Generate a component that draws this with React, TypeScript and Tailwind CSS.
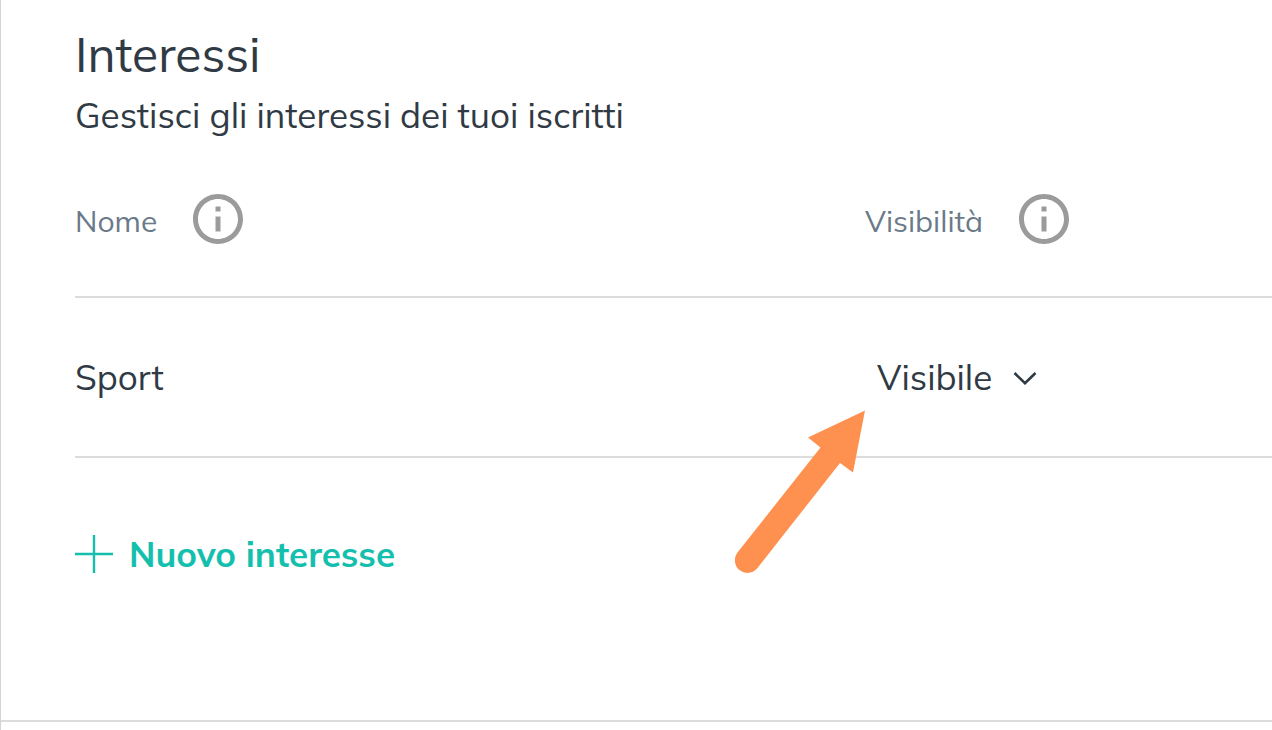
import { MdInfoOutline } from "react-icons/md";

const interests = [{ id: 1, name: "Sport", visibility: "Visibile" }];

const InfoButton = ({ label }: { label: string }) => {
  return (
    <button type="button" aria-label={label} className="text-[#9b9b9b]">
      <MdInfoOutline className="size-[60px]" />
    </button>
  );
};

const PointerArrow = () => {
  return (
    <svg
      viewBox="0 0 130 164"
      aria-hidden="true"
      className="pointer-events-none absolute top-full right-full h-[164px] w-[130px]"
    >
      <path
        d="M130 1.5 L118 63.5 L105 54 L22.5 159 A12.5 12.5 0 0 1 2.5 143.5 L85.5 38.5 L73 28.5 Z"
        fill="#ff9150"
      />
    </svg>
  );
};

const App = () => {
  return (
    <main className="min-h-screen border-l border-[#d4d4d4] bg-white font-['Mulish','Muli','Noto_Sans',sans-serif] text-[#303a44]">
      <section className="border-b-2 border-[#dcdcdc] pt-6 pb-[141px] pl-[74px]">
        <h1 className="text-[48px] leading-[60px]">Interessi</h1>
        <p className="pt-[7px] text-[35px] leading-[48px]">Gestisci gli interessi dei tuoi iscritti</p>
        <table className="mt-[50px] w-full table-fixed border-collapse text-left">
          <thead>
            <tr className="border-b-2 border-[#dcdcdc] text-[30px] text-[#6b7a89]">
              <th className="w-[66%] p-0 pb-[47px] font-normal">
                <div className="flex items-center gap-[31px]">
                  <span className="pt-1">Nome</span>
                  <InfoButton label="Informazioni sul nome" />
                </div>
              </th>
              <th className="p-0 pb-[47px] font-normal">
                <div className="flex items-center gap-[31px]">
                  <span className="pt-1">Visibilità</span>
                  <InfoButton label="Informazioni sulla visibilità" />
                </div>
              </th>
            </tr>
          </thead>
          <tbody>
            {interests.map((item) => (
              <tr key={item.id} className="h-40 border-b-2 border-[#dcdcdc] text-[35px] leading-[48px]">
                <td className="p-0">{item.name}</td>
                <td className="p-0">
                  <div className="relative inline-flex items-center py-2">
                    <select
                      aria-label={`Visibilità di ${item.name}`}
                      defaultValue={item.visibility}
                      className="field-sizing-content appearance-none bg-transparent pr-[45px] pl-3"
                    >
                      <option>Visibile</option>
                    </select>
                    <svg viewBox="0 0 24 16" fill="none" className="pointer-events-none absolute right-0 h-4 w-6">
                      <path d="M1.5 4 L12 14.2 L22.5 4" stroke="currentColor" strokeWidth="2.6" />
                    </svg>
                    <PointerArrow />
                  </div>
                </td>
              </tr>
            ))}
          </tbody>
        </table>
        <button type="button" className="mt-[71px] flex items-center gap-4 text-[35px] leading-[50px] font-bold text-[#14bfae]">
          <svg viewBox="0 0 38 38" fill="none" className="size-[38px]">
            <path d="M0 19H38M19 0V38" stroke="currentColor" strokeWidth="2.4" />
          </svg>
          Nuovo interesse
        </button>
      </section>
    </main>
  );
};

export default App;
